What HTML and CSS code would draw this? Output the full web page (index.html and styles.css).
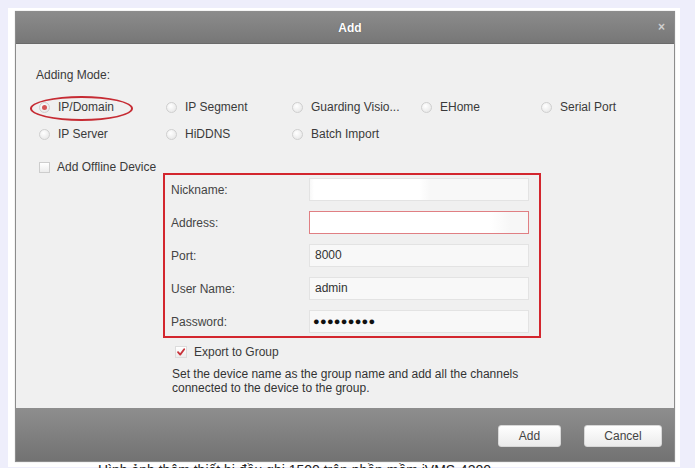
FILE: index.html
```html
<!DOCTYPE html>
<html>
<head>
<meta charset="utf-8">
<link rel="stylesheet" href="styles.css">
</head>
<body>
<div class="frame">
  <div class="dialog">
    <div class="titlebar">
      <span class="title">Add</span>
      <span class="close">×</span>
    </div>
    <div class="content">
      <div class="mode-label">Adding Mode:</div>
      <div class="modes">
        <label class="opt"><span class="radio on"></span>IP/Domain</label>
        <label class="opt"><span class="radio"></span>IP Segment</label>
        <label class="opt"><span class="radio"></span>Guarding Visio...</label>
        <label class="opt"><span class="radio"></span>EHome</label>
        <label class="opt"><span class="radio"></span>Serial Port</label>
        <label class="opt"><span class="radio"></span>IP Server</label>
        <label class="opt"><span class="radio"></span>HiDDNS</label>
        <label class="opt"><span class="radio"></span>Batch Import</label>
      </div>
      <div class="offline"><span class="check"></span>Add Offline Device</div>
      <div class="formbox">
        <div class="row"><span class="lbl">Nickname:</span><span class="input nick"></span></div>
        <div class="row"><span class="lbl">Address:</span><span class="input addr"></span></div>
        <div class="row"><span class="lbl">Port:</span><span class="input">8000</span></div>
        <div class="row"><span class="lbl">User Name:</span><span class="input">admin</span></div>
        <div class="row"><span class="lbl">Password:</span><span class="input pwd">●●●●●●●●●</span></div>
      </div>
      <div class="export"><span class="check checked"><svg viewBox="0 0 10 10" width="10" height="10"><path d="M2 5.2 L4.2 7.6 L8.2 2.2" fill="none" stroke="#c8323a" stroke-width="1.8" stroke-linecap="round" stroke-linejoin="round"/></svg></span>Export to Group</div>
      <div class="desc">Set the device name as the group name and add all the channels<br>connected to the device to the group.</div>
      <div class="ring"></div>
    </div>
    <div class="footer">
      <button class="btn add">Add</button>
      <button class="btn cancel">Cancel</button>
    </div>
  </div>
</div>
<div class="caption">Hình ảnh thêm thiết bị đầu ghi 1500 trên phần mềm iVMS-4200</div>
</body>
</html>
```
FILE: styles.css
```css
html, body {
  margin: 0;
  padding: 0;
}
body {
  background: #eeeefb;
  font-family: "Liberation Sans", Arial, sans-serif;
  font-size: 12px;
  color: #3a3a3a;
  padding: 8px 15px 0 8px;
  height: 460px;
  overflow: hidden;
}
.frame {
  background: #fff;
  padding: 3px 5px 5px 7px;
  width: 660px;
}
.dialog {
  border: 1px solid #8c8c8c;
  width: 658px;
  box-shadow: 0 0 1px #bbb;
}
.titlebar {
  height: 31px;
  background: linear-gradient(#8b8b8b, #777);
  border-bottom: 1px solid #6a6a6a;
  display: flex;
  align-items: center;
  justify-content: center;
  position: relative;
}
.title {
  color: #fff;
  font-weight: bold;
  font-size: 12px;
  text-shadow: 0 0 1px #555;
  margin-left: 10px;
}
.close {
  position: absolute;
  right: 9px;
  top: 8px;
  color: #cfcfcf;
  font-size: 12px;
  font-weight: bold;
}
.content {
  background: #f0f0f0;
  height: 364px;
  padding: 24px 0 0 20px;
  box-sizing: border-box;
  position: relative;
}
.mode-label {
  height: 14px;
  line-height: 14px;
}
.modes {
  display: grid;
  grid-template-columns: 127px 126px 129px 120px 110px;
  row-gap: 13px;
  margin-top: 18px;
  padding-left: 3px;
}
.opt {
  display: flex;
  align-items: center;
  gap: 8px;
  height: 14px;
  line-height: 14px;
  white-space: nowrap;
}
.radio {
  width: 9px;
  height: 9px;
  border-radius: 50%;
  border: 1px solid #cfcfcf;
  background: radial-gradient(circle at 40% 35%, #fff, #e2e2e2);
  flex: none;
  position: relative;
}
.radio.on::after {
  content: "";
  position: absolute;
  left: 2px;
  top: 2px;
  width: 5px;
  height: 5px;
  border-radius: 50%;
  background: #d45555;
}
.offline {
  display: flex;
  align-items: center;
  gap: 7px;
  height: 14px;
  line-height: 14px;
  margin-top: 19px;
  padding-left: 3px;
}
.check {
  width: 9px;
  height: 9px;
  border: 1px solid #cdcdcd;
  background: linear-gradient(#fff, #ececec);
  flex: none;
  display: flex;
  align-items: center;
  justify-content: center;
}
.check.checked {
  width: 10px;
  height: 10px;
  border-color: #dcdcdc;
}
.formbox {
  margin: -1px 0 0 127px;
  width: 368px;
  height: 158px;
  border: 2px solid #d3262e;
  padding: 3px 0 0 6px;
  display: flex;
  flex-direction: column;
  gap: 10px;
}
.row {
  display: flex;
  align-items: center;
  height: 23px;
}
.lbl {
  width: 138px;
  color: #444;
}
.input {
  width: 220px;
  height: 23px;
  box-sizing: border-box;
  background: #f8f8f8;
  border: 1px solid #e3e3e3;
  padding-left: 5px;
  line-height: 21px;
  color: #333;
}
.input.nick {
  background: linear-gradient(90deg, #f8f8f8 0, #fff 4px, #fff 110px, #f8f8f8 120px);
}
.input.addr {
  background: linear-gradient(90deg, #fff 0, #fff 180px, #f7f7f7 200px);
  border: 1px solid #e07f83;
}
.input.pwd {
  font-size: 11px;
  letter-spacing: 0.3px;
  color: #111;
  padding-left: 3px;
}
.export {
  display: flex;
  align-items: center;
  gap: 7px;
  height: 14px;
  line-height: 14px;
  margin: 7px 0 0 139px;
}
.desc {
  margin: 8px 0 0 136px;
  line-height: 14px;
  color: #333;
}
.ring {
  position: absolute;
  left: 14px;
  top: 52px;
  width: 99px;
  height: 21px;
  border: 2px solid #c62b33;
  border-radius: 50%;
}
.footer {
  height: 53px;
  background: linear-gradient(#8e8e8e, #727272);
  display: flex;
  justify-content: flex-end;
  align-items: flex-start;
  gap: 23px;
  padding: 17px 12px 0 0;
  box-sizing: border-box;
}
.btn {
  height: 22px;
  border: 1px solid #d8d8d8;
  border-radius: 3px;
  background: linear-gradient(#ffffff, #ebebeb);
  font-family: "Liberation Sans", Arial, sans-serif;
  font-size: 12px;
  color: #444;
  padding: 0;
}
.btn.add {
  width: 63px;
}
.btn.cancel {
  width: 78px;
}
.caption {
  margin: -5px 0 0 90px;
  font-size: 14px;
  line-height: 16px;
  color: #222;
  white-space: nowrap;
}
```
